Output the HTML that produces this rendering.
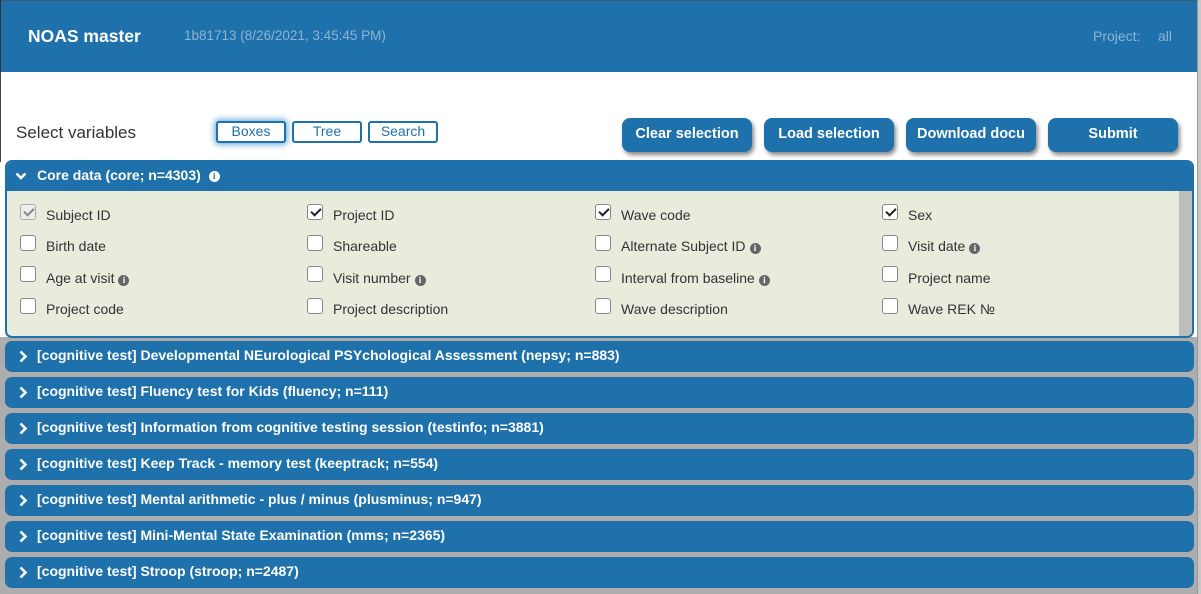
<!DOCTYPE html>
<html><head><meta charset="utf-8"><style>
*{box-sizing:border-box;margin:0;padding:0}
body{width:1201px;height:594px;overflow:hidden;background:#fff;font-family:"Liberation Sans",sans-serif;position:relative}
.hdr{position:absolute;left:0;top:0;width:1197px;height:72px;background:#1e71aa;border-left:1px solid #333;border-top:1px solid #3a5a72}
.hdr .t{position:absolute;left:27px;top:25px;color:#fff;font-weight:bold;font-size:17.5px}
.hdr .v{position:absolute;left:183px;top:27px;color:#8db4d4;font-size:13.5px}
.hdr .p{position:absolute;left:1092px;top:27px;color:#8db4d4;font-size:14px}
.hdr .a{position:absolute;left:1157px;top:27px;color:#8db4d4;font-size:14px}
.sb{position:absolute;left:1197px;top:0;width:4px;height:594px;background:#c8c8c8;border-left:1px solid #999}
.lb{position:absolute;left:0;top:72px;width:1px;height:90px;background:#444}
.sel{position:absolute;left:16px;top:123px;font-size:17px;color:#333}
.tab{position:absolute;top:121px;height:22px;border:2px solid #1e71aa;border-radius:3px;color:#1e71aa;font-size:14px;text-align:center;line-height:17px;background:#fff}
.tab.on{box-shadow:0 0 6px 2px #7ab3de}
.btn{position:absolute;top:118px;width:130px;height:34px;background:#1e71aa;color:#fff;border-radius:8px;font-weight:bold;font-size:14.5px;text-align:center;line-height:33px;box-shadow:2px 3px 4px #888}
.gray{position:absolute;left:0;top:337px;width:1197px;height:257px;background:#adadad}
.core{position:absolute;left:5px;top:160px;width:1189px;height:178px;border:2px solid #1e71aa;border-radius:7px;background:#e8ecdc;overflow:hidden}
.core .h{height:29px;background:#1e71aa;color:#fff;font-weight:bold;font-size:14px;line-height:27px;padding-left:30px;position:relative}
.core .isb{position:absolute;left:1172px;top:29px;width:13px;height:150px;background:#bdbdbd}
.i{display:inline-block;width:11px;height:11px;border-radius:50%;background:#fff;color:#1e71aa;font-size:9px;line-height:11px;text-align:center;font-weight:bold;font-family:"Liberation Serif",serif;vertical-align:1px;margin-left:8px}
.ig{display:inline-block;width:11px;height:11px;border-radius:50%;background:#666;color:#fff;font-size:9px;line-height:11px;text-align:center;font-weight:bold;font-family:"Liberation Serif",serif;vertical-align:0;margin-left:4px}
.it{position:absolute;font-size:14px;color:#333;white-space:nowrap}
.cb{position:absolute;width:16px;height:16px;border:1px solid #888;border-radius:3px;background:#fff;margin:-1px 0 0 -1px}
.cb.c::after{content:"";position:absolute;left:5px;top:1px;width:4px;height:8px;border:solid #222;border-width:0 2px 2px 0;transform:rotate(45deg)}
.cb.d{background:#eee;border-color:#aaa}.cb.d::after{border-color:#888}
.bar{position:absolute;left:5px;width:1189px;height:31px;background:#1e71aa;border-radius:7px;color:#fff;font-weight:bold;font-size:14px;line-height:29px;padding-left:32px;white-space:nowrap}
.chev{position:absolute;left:14px;top:9px}
</style></head><body>
<div class="hdr"><span class="t">NOAS master</span><span class="v">1b81713 (8/26/2021, 3:45:45 PM)</span><span class="p">Project:</span><span class="a">all</span></div>
<div class="lb"></div>
<div class="sel">Select variables</div>
<div class="tab on" style="left:216px;width:70px">Boxes</div>
<div class="tab" style="left:292px;width:70px">Tree</div>
<div class="tab" style="left:368px;width:70px">Search</div>
<div class="btn" style="left:622px">Clear selection</div>
<div class="btn" style="left:764px">Load selection</div>
<div class="btn" style="left:906px">Download docu</div>
<div class="btn" style="left:1048px">Submit</div>
<div class="gray"></div>
<div class="core">
<div class="h"><svg class="chev" style="top:10px;left:8px" width="12" height="9" viewBox="0 0 12 9"><path d="M1.5 1.5L6 6L10.5 1.5" stroke="#fff" stroke-width="2.6" fill="none"/></svg>Core data (core; n=4303)<span class="i">i</span></div>
<div class="isb"></div>
</div>
<div style="position:absolute;left:0;top:0;width:1201px;height:594px">
<span class="cb c d" style="left:21px;top:205px"></span><span class="it" style="left:46px;top:207px">Subject ID</span>
<span class="cb c" style="left:308px;top:205px"></span><span class="it" style="left:333px;top:207px">Project ID</span>
<span class="cb c" style="left:596px;top:205px"></span><span class="it" style="left:621px;top:207px">Wave code</span>
<span class="cb c" style="left:883px;top:205px"></span><span class="it" style="left:908px;top:207px">Sex</span>
<span class="cb" style="left:21px;top:236px"></span><span class="it" style="left:46px;top:238px">Birth date</span>
<span class="cb" style="left:308px;top:236px"></span><span class="it" style="left:333px;top:238px">Shareable</span>
<span class="cb" style="left:596px;top:236px"></span><span class="it" style="left:621px;top:238px">Alternate Subject ID<span class="ig">i</span></span>
<span class="cb" style="left:883px;top:236px"></span><span class="it" style="left:908px;top:238px">Visit date<span class="ig">i</span></span>
<span class="cb" style="left:21px;top:267px"></span><span class="it" style="left:46px;top:270px">Age at visit<span class="ig">i</span></span>
<span class="cb" style="left:308px;top:267px"></span><span class="it" style="left:333px;top:270px">Visit number<span class="ig">i</span></span>
<span class="cb" style="left:596px;top:267px"></span><span class="it" style="left:621px;top:270px">Interval from baseline<span class="ig">i</span></span>
<span class="cb" style="left:883px;top:267px"></span><span class="it" style="left:908px;top:270px">Project name</span>
<span class="cb" style="left:21px;top:299px"></span><span class="it" style="left:46px;top:301px">Project code</span>
<span class="cb" style="left:308px;top:299px"></span><span class="it" style="left:333px;top:301px">Project description</span>
<span class="cb" style="left:596px;top:299px"></span><span class="it" style="left:621px;top:301px">Wave description</span>
<span class="cb" style="left:883px;top:299px"></span><span class="it" style="left:908px;top:301px">Wave REK №</span>
</div>
<div class="bar" style="top:341px"><svg class="chev" width="9" height="13" viewBox="0 0 9 13"><path d="M1.5 1.5L6.5 6.5L1.5 11.5" stroke="#fff" stroke-width="2.6" fill="none"/></svg>[cognitive test] Developmental NEurological PSYchological Assessment (nepsy; n=883)</div>
<div class="bar" style="top:377px"><svg class="chev" width="9" height="13" viewBox="0 0 9 13"><path d="M1.5 1.5L6.5 6.5L1.5 11.5" stroke="#fff" stroke-width="2.6" fill="none"/></svg>[cognitive test] Fluency test for Kids (fluency; n=111)</div>
<div class="bar" style="top:413px"><svg class="chev" width="9" height="13" viewBox="0 0 9 13"><path d="M1.5 1.5L6.5 6.5L1.5 11.5" stroke="#fff" stroke-width="2.6" fill="none"/></svg>[cognitive test] Information from cognitive testing session (testinfo; n=3881)</div>
<div class="bar" style="top:449px"><svg class="chev" width="9" height="13" viewBox="0 0 9 13"><path d="M1.5 1.5L6.5 6.5L1.5 11.5" stroke="#fff" stroke-width="2.6" fill="none"/></svg>[cognitive test] Keep Track - memory test (keeptrack; n=554)</div>
<div class="bar" style="top:485px"><svg class="chev" width="9" height="13" viewBox="0 0 9 13"><path d="M1.5 1.5L6.5 6.5L1.5 11.5" stroke="#fff" stroke-width="2.6" fill="none"/></svg>[cognitive test] Mental arithmetic - plus / minus (plusminus; n=947)</div>
<div class="bar" style="top:521px"><svg class="chev" width="9" height="13" viewBox="0 0 9 13"><path d="M1.5 1.5L6.5 6.5L1.5 11.5" stroke="#fff" stroke-width="2.6" fill="none"/></svg>[cognitive test] Mini-Mental State Examination (mms; n=2365)</div>
<div class="bar" style="top:557px"><svg class="chev" width="9" height="13" viewBox="0 0 9 13"><path d="M1.5 1.5L6.5 6.5L1.5 11.5" stroke="#fff" stroke-width="2.6" fill="none"/></svg>[cognitive test] Stroop (stroop; n=2487)</div>
<div class="sb"></div>
</body></html>
